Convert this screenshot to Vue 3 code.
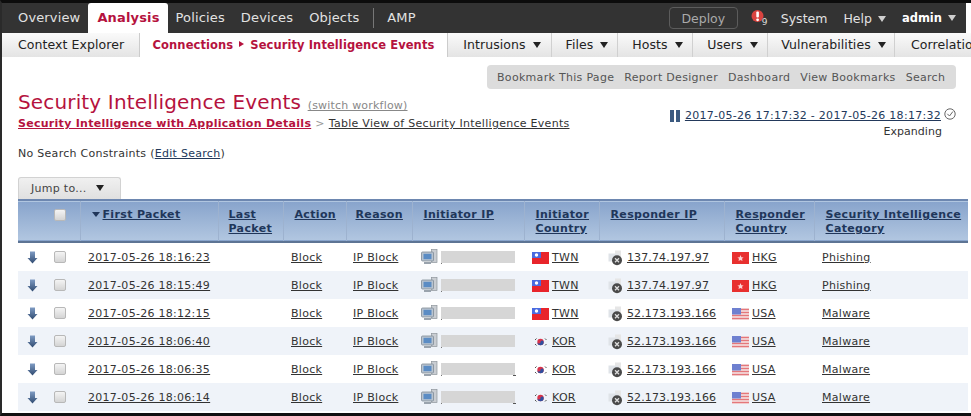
<script setup>
const navItems = ['Policies', 'Devices', 'Objects']
const subItems = [
  { label: 'Intrusions', w: 104 },
  { label: 'Files', w: 66 },
  { label: 'Hosts', w: 75 },
  { label: 'Users', w: 75 },
  { label: 'Vulnerabilities', w: 127 }
]
const bookmarks = ['Bookmark This Page', 'Report Designer', 'Dashboard', 'View Bookmarks', 'Search']
const headers = [
  { label: 'Last Packet' }, { label: 'Action' }, { label: 'Reason' }, { label: 'Initiator IP' },
  { label: 'Initiator Country' }, { label: 'Responder IP' }, { label: 'Responder Country' },
  { label: 'Security Intelligence Category' }
]
const rows = [
  { time: '2017-05-26 18:16:23', from: 'TWN', ip: '137.74.197.97', to: 'HKG', cat: 'Phishing', tail: false },
  { time: '2017-05-26 18:15:49', from: 'TWN', ip: '137.74.197.97', to: 'HKG', cat: 'Phishing', tail: false },
  { time: '2017-05-26 18:12:15', from: 'TWN', ip: '52.173.193.166', to: 'USA', cat: 'Malware', tail: false },
  { time: '2017-05-26 18:06:40', from: 'KOR', ip: '52.173.193.166', to: 'USA', cat: 'Malware', tail: false },
  { time: '2017-05-26 18:06:35', from: 'KOR', ip: '52.173.193.166', to: 'USA', cat: 'Malware', tail: true },
  { time: '2017-05-26 18:06:14', from: 'KOR', ip: '52.173.193.166', to: 'USA', cat: 'Malware', tail: true }
]
</script>

<template>
  <div class="page">
    <header class="topnav">
      <a class="nav-item first">Overview</a>
      <a class="nav-item active">Analysis</a>
      <a v-for="n in navItems" :key="n" class="nav-item">{{ n }}</a>
      <span class="nav-sep"></span>
      <a class="nav-item">AMP</a>
      <div class="nav-right">
        <button class="deploy">Deploy</button>
        <span class="alert">
          <svg width="14" height="16" viewBox="0 0 14 16">
            <circle cx="6.5" cy="7" r="6" fill="#d9433f" />
            <rect x="5.3" y="2.5" width="2.6" height="6" rx="1" fill="#fff" />
            <circle cx="6.6" cy="10.8" r="1.4" fill="#fff" />
          </svg>
          <b>9</b>
        </span>
        <a class="nav-link">System</a>
        <a class="nav-link">Help <i class="tri light"></i></a>
        <a class="nav-link admin">admin <i class="tri light"></i></a>
      </div>
    </header>

    <nav class="subnav">
      <a class="sub-item context">Context Explorer</a>
      <a class="sub-item sub-active">Connections <i class="tri-right"></i> Security Intelligence Events</a>
      <a v-for="s in subItems" :key="s.label" class="sub-item sub-menu" :style="{ width: s.w + 'px' }">{{ s.label }} <i class="tri"></i></a>
      <a class="sub-item sub-last">Correlation</a>
    </nav>

    <main class="content">
      <div class="bookmarks">
        <a v-for="b in bookmarks" :key="b">{{ b }}</a>
      </div>

      <div class="title-row">
        <div>
          <h1>Security Intelligence Events <a class="switch">(switch workflow)</a></h1>
          <div class="crumbs">
            <a class="crumb-main">Security Intelligence with Application Details</a>
            <span class="chev">&gt;</span>
            <a class="crumb-link">Table View of Security Intelligence Events</a>
          </div>
        </div>
        <div class="range">
          <div class="range-line">
            <span class="pause"><i></i><i></i></span>
            <a>2017-05-26 17:17:32 - 2017-05-26 18:17:32</a>
            <svg class="clock" width="12" height="12" viewBox="0 0 12 12">
              <circle cx="6" cy="6" r="5.2" fill="#fff" stroke="#666" stroke-width="1" />
              <path d="M3.3 5.8 L5.5 8 L8.9 3.5" fill="none" stroke="#666" stroke-width="1" />
            </svg>
          </div>
          <div class="expanding">Expanding</div>
        </div>
      </div>

      <p class="constraints">No Search Constraints (<a>Edit Search</a>)</p>

      <div class="jump">Jump to... <i class="tri"></i></div>

      <table class="events">
        <colgroup>
          <col style="width:62px" /><col style="width:138px" /><col style="width:65px" /><col style="width:63px" />
          <col style="width:66px" /><col style="width:112px" /><col style="width:75px" /><col style="width:125px" />
          <col style="width:90px" /><col style="width:154px" />
        </colgroup>
        <thead>
          <tr>
            <th class="th-check"><span class="check head-check"></span></th>
            <th class="th-first"><i class="sort"></i><a>First Packet</a></th>
            <th v-for="h in headers" :key="h.label"><a>{{ h.label }}</a></th>
          </tr>
        </thead>
        <tbody>
          <tr v-for="(r, i) in rows" :key="i" :class="{ alt: i % 2 === 1 }">
            <td class="td-check">
              <svg class="down" width="11" height="13" viewBox="0 0 11 13">
                <defs>
                  <linearGradient id="dn" x1="0" y1="0" x2="0" y2="1">
                    <stop offset="0" stop-color="#7f9cc4" />
                    <stop offset="1" stop-color="#2f4a70" />
                  </linearGradient>
                </defs>
                <path d="M3 0.5 H8 V7 H10.5 L5.5 12.5 L0.5 7 H3 Z" fill="url(#dn)" />
              </svg>
              <span class="check"></span>
            </td>
            <td><a>{{ r.time }}</a></td>
            <td></td>
            <td><a>Block</a></td>
            <td class="td-reason"><a>IP Block</a></td>
            <td class="td-ip">
              <svg class="host" width="17" height="16" viewBox="0 0 17 16">
                <rect x="10.5" y="0.5" width="5.5" height="13" fill="#c9cdd2" stroke="#8d949c" stroke-width="0.7" />
                <rect x="0.5" y="3" width="12" height="9" rx="1" fill="#b9c4d0" stroke="#7f8a96" stroke-width="0.8" />
                <rect x="2.5" y="4.8" width="8" height="5.4" fill="#5b8cc4" />
                <rect x="3" y="13" width="7" height="2" fill="#9aa3ad" />
              </svg>
              <span class="redacted" :class="{ tail: r.tail }"></span>
            </td>
            <td class="td-flag">
              <svg v-if="r.from === 'TWN'" class="flag" width="17" height="12" viewBox="0 0 17 12">
                <rect width="17" height="12" fill="#e8242b" />
                <rect width="9" height="6" fill="#4a6be0" />
                <circle cx="4.5" cy="3" r="1.7" fill="#fff" />
              </svg>
              <svg v-else class="flag" width="17" height="12" viewBox="0 0 17 12">
                <circle cx="8.5" cy="6" r="3.2" fill="#d8324a" />
                <path d="M5.3 6 A3.2 3.2 0 0 0 11.7 6 A1.6 1.6 0 0 0 8.5 6 A1.6 1.6 0 0 1 5.3 6 Z" fill="#2f4f9e" />
                <path d="M3 4 L4.5 2.5 M13 2.5 L14.5 4 M3 8 L4.5 9.5 M13 9.5 L14.5 8" stroke="#555" stroke-width="1" />
              </svg>
              <a>{{ r.from }}</a>
            </td>
            <td class="td-ip td-resp">
              <svg class="resp" width="18" height="16" viewBox="0 0 18 16">
                <rect x="7" y="0.5" width="6" height="11" fill="#e6e6e6" />
                <rect x="0.5" y="3.5" width="10" height="8" fill="#dfe3e8" />
                <circle cx="9" cy="10.2" r="5" fill="#4a4a4a" />
                <path d="M7 8.2 L11 12.2 M11 8.2 L7 12.2" stroke="#ddd" stroke-width="1.3" />
              </svg>
              <a>{{ r.ip }}</a>
            </td>
            <td class="td-flag">
              <svg v-if="r.to === 'HKG'" class="flag" width="17" height="12" viewBox="0 0 17 12">
                <rect width="17" height="12" fill="#e8302f" />
                <path d="M8.5 3 L9.4 5.2 L11.6 5.4 L10 6.8 L10.5 9 L8.5 7.9 L6.5 9 L7 6.8 L5.4 5.4 L7.6 5.2 Z" fill="#fbd4d4" />
              </svg>
              <svg v-else class="flag" width="17" height="12" viewBox="0 0 17 12">
                <rect width="17" height="12" fill="#f6e8e8" />
                <path d="M0 1.5 H17 M0 4.5 H17 M0 7.5 H17 M0 10.5 H17" stroke="#e4777b" stroke-width="1.3" />
                <rect width="9" height="6.5" fill="#6e80d0" />
              </svg>
              <a>{{ r.to }}</a>
            </td>
            <td class="td-cat"><a>{{ r.cat }}</a></td>
          </tr>
        </tbody>
      </table>
    </main>
  </div>
</template>

<style>
html, body { margin: 0; padding: 0; background: #fff; }
</style>

<style scoped>
.page {
  width: 971px; height: 416px; box-sizing: border-box; overflow: hidden;
  border-top: 3px solid #0c0c0c; border-bottom: 3px solid #111; border-left: 2px solid #2a2a2a;
  background: #fff; font-family: "DejaVu Sans", Verdana, sans-serif; font-size: 11px; color: #333; letter-spacing: 0.28px;
}
a { color: inherit; }
i { font-style: normal; }
.topnav {
  display: flex; align-items: flex-end; height: 30px; width: 964px; background: #333; color: #e2e2e2; font-size: 13px; letter-spacing: 0.15px;
}
.nav-item { height: 30px; line-height: 30px; padding: 0 8px; box-sizing: border-box; }
.nav-item.first { margin-left: 8px; }
.nav-item.active {
  background: #fff; color: #b5123e; font-weight: 700; border-radius: 3px 3px 0 0; padding: 0 8px 0 9px; margin-left: 0;
}
.nav-sep { width: 1px; height: 20px; background: #777; margin: 0 5px 5px 6px; }
.nav-right { margin-left: auto; display: flex; align-items: center; height: 30px; font-size: 12.5px; letter-spacing: 0; }
.deploy {
  width: 69px; height: 22px; box-sizing: border-box; border: 1px solid #5c5c5c; border-radius: 4px; background: #333;
  color: #aaa; font: 12.5px "DejaVu Sans", sans-serif; padding: 0; margin-right: 13px;
}
.alert { position: relative; width: 30px; height: 18px; }
.alert b { position: absolute; left: 11px; top: 8px; font-size: 9px; font-weight: 400; color: #ddd; }
.nav-link { margin-right: 16px; white-space: nowrap; }
.nav-link .tri { margin-left: 2px; }
.nav-link.admin { font-weight: 700; font-size: 11.5px; color: #fff; margin-right: 10px; }
.tri {
  display: inline-block; width: 0; height: 0; border-left: 4px solid transparent; border-right: 4px solid transparent;
  border-top: 6px solid #222; margin-left: 3px; vertical-align: 1px;
}
.tri.light { border-top-color: #cfcfcf; }
.tri-right {
  display: inline-block; width: 0; height: 0; border-top: 3px solid transparent; border-bottom: 3px solid transparent;
  border-left: 5px solid #b5123e; margin: 0 2px; vertical-align: 2px;
}
.subnav {
  display: flex; height: 24px; width: 969px; overflow: hidden; background: linear-gradient(#fafafa, #e4e4e4);
  font-size: 12.5px; color: #222; white-space: nowrap; letter-spacing: 0.08px;
}
.sub-item { line-height: 24px; box-sizing: border-box; flex: none; }
.context { width: 137px; padding-left: 16px; }
.sub-active {
  width: 309px; background: #fff; color: #b5123e; font-weight: 700; text-align: center; font-size: 11.5px;
  border-left: 1px solid #ccc; border-right: 1px solid #ccc; letter-spacing: 0.08px;
}
.sub-menu { text-align: center; border-right: 1px solid #d0d0d0; padding-left: 5px; }
.sub-last { padding-left: 16px; }
.content { padding: 8px 0 0 16px; }
.bookmarks {
  display: flex; gap: 10px; width: 469px; height: 24px; box-sizing: border-box; margin-left: 469px; padding-left: 10px;
  background: #dcdcdc; border-radius: 4px; line-height: 25px; color: #555; white-space: nowrap; letter-spacing: 0.3px;
}
.title-row { display: flex; justify-content: space-between; width: 938px; }
h1 { margin: 0; font-size: 20px; font-weight: 400; color: #b5123e; line-height: 26px; letter-spacing: 0.15px; }
.switch { font-size: 11px; color: #888; text-decoration: underline; letter-spacing: 0.2px; }
.crumbs { display: flex; align-items: baseline; margin-top: -3px; line-height: 16px; }
.crumb-main { color: #b5123e; font-weight: 700; text-decoration: underline; }
.chev { color: #999; margin: 0 4px; }
.crumb-link { text-decoration: underline; color: #333; }
.range { padding-top: 19px; text-align: right; }
.range-line { display: flex; align-items: center; line-height: 15px; color: #23395b; }
.range-line a { text-decoration: underline; margin-left: 5px; margin-right: 3px; }
.pause { display: inline-flex; gap: 2px; }
.pause i { width: 4px; height: 12px; background: #3c5a80; }
.clock { margin-top: -3px; }
.expanding { margin-right: 14px; color: #333; line-height: 16px; margin-top: 1px; letter-spacing: 0.05px; }
.constraints { margin: 6px 0 0; line-height: 16px; color: #333; }
.constraints a { text-decoration: underline; color: #23395b; }
.jump {
  margin-top: 15px; width: 103px; height: 22px; box-sizing: border-box; padding-left: 12px; line-height: 21px;
  background: linear-gradient(#f0f0f0, #e0e0e0); border: 1px solid #d2d2d2; border-bottom: 0; border-radius: 3px 3px 0 0; color: #444;
}
.jump .tri { margin-left: 6px; }
.events { width: 950px; border-collapse: collapse; table-layout: fixed; margin: 0; }
.events thead tr {
  height: 42px; background: linear-gradient(#88a4cc, #b1c6e0);
  border-top: 2px solid #6d87b0; border-bottom: 2px solid #5d7494;
}
.events th {
  text-align: left; vertical-align: top; padding: 7px 0 0 11px; line-height: 14px; color: #20365a; font-weight: 700;
  border-left: 1px solid #9db2cf; overflow: hidden; letter-spacing: 0.35px;
}
.events th:first-child { border-left: 0; }
.events th:nth-child(3) { padding-left: 10px; }
.events th:nth-child(5) { padding-left: 9px; }
.events th a { text-decoration: underline; }
.th-first { padding-left: 9px; }
.events th.th-check { padding-top: 8px; }
.sort {
  display: inline-block; border-left: 4px solid transparent; border-right: 4px solid transparent; border-top: 5px solid #20365a;
  margin-right: 3px; vertical-align: 1px;
}
.events tbody tr { height: 28px; background: #fff; }
.events tbody tr.alt { background: #eff3f9; }
.events td { padding: 0 0 0 8px; white-space: nowrap; color: #333; overflow: hidden; }
.events td a { text-decoration: underline; }
.td-check { display: flex; align-items: center; height: 28px; box-sizing: border-box; }
.events td.td-check { padding-left: 9px; }
.down { margin-right: 16px; }
.check {
  display: inline-block; width: 12px; height: 12px; box-sizing: border-box; border: 1px solid #b8b8b8; border-radius: 2px;
  background: linear-gradient(#f4f4f4, #d4d4d4);
}
.head-check { margin-left: 25px; }
.host { vertical-align: middle; margin-right: 3px; }
.redacted {
  display: inline-block; position: relative; width: 74px; height: 12px; background: #d6d6d6; vertical-align: middle;
}
.redacted::before {
  content: ""; position: absolute; left: 0; bottom: -1px; width: 1px; height: 1px; background: #777;
}
.redacted.tail::after {
  content: ""; position: absolute; right: -1px; bottom: -1px; width: 3px; height: 1px; background: #555;
}
.td-flag .flag { vertical-align: middle; margin-right: 3px; }
.resp { vertical-align: middle; margin: -3px 1px -3px 0; }
.events td.td-ip { padding-left: 9px; }
.events td.td-resp { letter-spacing: 0.12px; }
.events td.td-reason { padding-left: 7px; }
</style>
